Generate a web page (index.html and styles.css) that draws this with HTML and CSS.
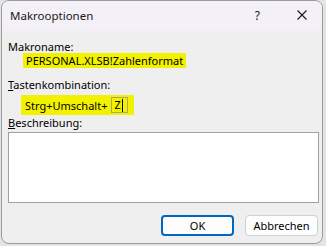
FILE: index.html
```html
<!DOCTYPE html>
<html lang="de">
<head>
<meta charset="utf-8">
<title>Makrooptionen</title>
<link rel="stylesheet" href="styles.css">
</head>
<body>
<div class="window">
  <div class="titlebar">
    <span class="title">Makrooptionen</span>
    <span class="help">?</span>
    <span class="close">
      <svg width="10" height="10" viewBox="0 0 10 10"><path d="M0.5 0.5 L9.5 9.5 M9.5 0.5 L0.5 9.5" stroke="#1a1a1a" stroke-width="1.1" fill="none"/></svg>
    </span>
  </div>
  <div class="content">
    <div class="label first">Makroname:</div>
    <div class="macro-name">PERSONAL.XLSB!Zahlenformat</div>
    <div class="label second"><u>T</u>astenkombination:</div>
    <div class="shortcut"><span class="shortcut-text">Strg+Umschalt+</span><span class="keybox">Z<span class="caret"></span></span></div>
    <div class="label third"><u>B</u>eschreibung:</div>
    <div class="desc"></div>
    <div class="buttons">
      <button class="btn primary">OK</button>
      <button class="btn">Abbrechen</button>
    </div>
  </div>
</div>
</body>
</html>
```

FILE: styles.css
```css
html, body {
  margin: 0;
  padding: 0;
}
body {
  width: 326px;
  height: 246px;
  background: #e4e4e4;
  font-family: "Noto Sans", "Open Sans", sans-serif;
  font-size: 11px;
  color: #000;
  overflow: hidden;
}
.window {
  margin: 0 0 0 1px;
  width: 322px;
  height: 244px;
  box-sizing: border-box;
  border: 1px solid #9a9a9a;
  border-radius: 8px;
  background: #efefef;
  overflow: hidden;
  display: flex;
  flex-direction: column;
}
.titlebar {
  height: 30px;
  background: #f3f0f7;
  display: flex;
  align-items: center;
  flex: none;
  padding-bottom: 2px;
  box-sizing: border-box;
}
.title {
  margin-left: 8px;
  font-size: 11.5px;
  color: #1a1a1a;
  flex: 1;
}
.help {
  font-size: 12px;
  color: #1a1a1a;
  margin-right: 37px;
}
.close {
  display: flex;
  margin-right: 15px;
}
.content {
  flex: 1;
  padding: 9px 0 0 6px;
  display: flex;
  flex-direction: column;
  align-items: flex-start;
}
.label {
  line-height: 13px;
  height: 13px;
}
.macro-name {
  margin: 0 0 0 15px;
  background: #f2f200;
  line-height: 15px;
  height: 15px;
  padding: 0 3px;
}
.label.second {
  margin-top: 10px;
}
.shortcut {
  margin: 4px 0 0 13px;
  background: #f2f200;
  height: 20px;
  width: 113px;
  box-sizing: border-box;
  display: flex;
  align-items: center;
  padding-left: 4px;
}
.keybox {
  margin-left: 4px;
  width: 17px;
  height: 16px;
  box-sizing: border-box;
  border: 1px solid #a7a77a;
  display: flex;
  align-items: center;
  padding-left: 2px;
  line-height: 14px;
}
.caret {
  display: inline-block;
  width: 1px;
  height: 13px;
  background: #000;
  margin-left: 1px;
}
.label.third {
  margin-top: 1px;
}
.desc {
  margin: 3px 0 0 0;
  width: 311px;
  height: 71px;
  box-sizing: border-box;
  border: 1px solid #a0a0a0;
  background: #fff;
}
.buttons {
  margin-top: 12px;
  align-self: stretch;
  display: flex;
  justify-content: flex-end;
  gap: 11px;
  padding-right: 4px;
}
.btn {
  width: 73px;
  height: 21px;
  box-sizing: border-box;
  border: 1px solid #d0d0d0;
  border-radius: 4px;
  background: #fdfdfd;
  font-family: inherit;
  font-size: 11px;
  color: #000;
  padding: 0;
}
.btn.primary {
  border: 2px solid #0067c0;
}
```
